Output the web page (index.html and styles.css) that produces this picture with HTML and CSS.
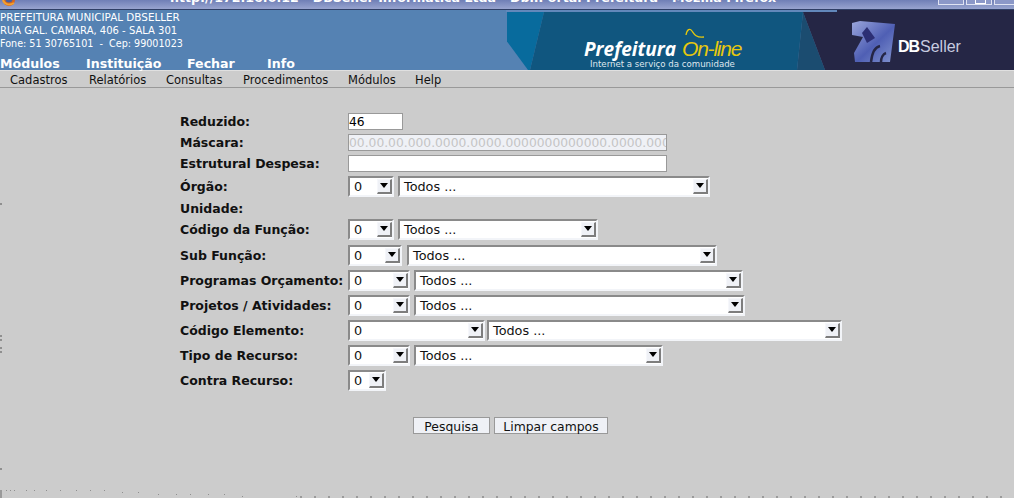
FILE: index.html
```html
<!DOCTYPE html>
<html lang="pt-BR">
<head>
<meta charset="utf-8">
<title>Prefeitura On-line</title>
<link rel="stylesheet" href="styles.css">
</head>
<body>
<div class="titlebar">
  <svg class="ff-icon" width="16" height="9" viewBox="0 0 16 9"><circle cx="8" cy="0" r="6" fill="#d8661c"/><circle cx="8" cy="-1" r="3.5" fill="#4a5f9c"/><path d="M2 0c1 4 6 6 11 3" fill="none" stroke="#f2a030" stroke-width="2"/></svg>
  <span class="title-text">http://172.16.0.12 - DBSeller Informática Ltda - Dbl.Portal Prefeitura - Mozilla Firefox</span>
  <span class="win-btns"><i></i><i class="max"></i><i></i></span>
</div>
<header class="header">
  <div class="header-left">
    <div class="address">
      <div>PREFEITURA MUNICIPAL DBSELLER</div>
      <div class="addr-2">RUA GAL. CAMARA, 406 - SALA 301</div>
      <div class="addr-3">Fone: 51 30765101 &nbsp;-&nbsp; Cep: 99001023</div>
    </div>
    <nav class="topnav"><a>Módulos</a><a>Instituição</a><a>Fechar</a><a>Info</a></nav>
  </div>
  <svg class="banner" width="508" height="60" viewBox="0 0 508 60">
    <defs>
      <linearGradient id="cube" x1="0" y1="0" x2="1" y2="1"><stop offset="0" stop-color="#9ba6dc"/><stop offset=".55" stop-color="#4f5fb4"/><stop offset="1" stop-color="#8294d0"/></linearGradient>
    </defs>
    <rect x="0" y="0" width="331" height="2" fill="#6288bb"/>
    <polygon points="1,2 38,2 24,60 22,60 1,31.5" fill="#086b9d"/>
    <polygon points="38,2 297,2 291,60 24,60" fill="#10567f"/>
    <polygon points="297,2 319,60 291,60" fill="#1b4c70"/>
    <polygon points="297,2 331,2 331,0 508,0 508,60 319,60" fill="#252645"/>
    <text class="b-pref" x="78" y="46">Prefeitura</text>
    <text class="b-online" x="176" y="46">On-line</text>
    <path d="M180 25c1-6 4-7 6-4s4 7 12 6" fill="none" stroke="#e6c80e" stroke-width="1.3"/>
    <text class="b-tag" x="84" y="57">Internet a serviço da comunidade</text>
    <polygon points="346,13 354,11 389,14 384,52 349,52 348,43 357,27 346,25" fill="url(#cube)"/>
    <polygon points="356,23 361,17 369,28 361,33" fill="#2c2f74"/>
    <path d="M365 52c1-9 4-15 9-16M375 52c0-4 2-8 5-9" fill="none" stroke="#252645" stroke-width="2.5"/>
    <text class="b-db" x="392" y="42">DB</text>
    <text class="b-seller" x="414" y="42">Seller</text>
  </svg>
</header>
<nav class="menu"><a class="m-cad">Cadastros</a><a class="m-rel">Relatórios</a><a class="m-con">Consultas</a><a class="m-pro">Procedimentos</a><a class="m-mod">Módulos</a><a>Help</a></nav>
<main class="form">
  <div class="row gap"><label class="lbl tall">Reduzido:</label><input class="text w-reduz" value="46"></div>
  <div class="row gap"><label class="lbl tall">Máscara:</label><input class="text w-long" value="00.00.00.000.0000.0000.0000000000000.0000.0000" disabled></div>
  <div class="row gap"><label class="lbl tall">Estrutural Despesa:</label><input class="text w-long"></div>
  <div class="row gap-s"><label class="lbl">Órgão:</label><div class="sel a46"><span>0</span><b></b></div><div class="sel a312"><span>Todos ...</span><b></b></div></div>
  <div class="row"><label class="lbl">Unidade:</label></div>
  <div class="row gap-l"><label class="lbl">Código da Função:</label><div class="sel a46"><span>0</span><b></b></div><div class="sel a200"><span>Todos ...</span><b></b></div></div>
  <div class="row gap"><label class="lbl">Sub Função:</label><div class="sel a54"><span>0</span><b></b></div><div class="sel a310 ml5"><span>Todos ...</span><b></b></div></div>
  <div class="row gap"><label class="lbl">Programas Orçamento:</label><div class="sel a62"><span>0</span><b></b></div><div class="sel a329"><span>Todos ...</span><b></b></div></div>
  <div class="row gap"><label class="lbl">Projetos / Atividades:</label><div class="sel a62"><span>0</span><b></b></div><div class="sel a331"><span>Todos ...</span><b></b></div></div>
  <div class="row gap"><label class="lbl">Código Elemento:</label><div class="sel a137"><span>0</span><b></b></div><div class="sel a355 ml3"><span>Todos ...</span><b></b></div></div>
  <div class="row gap"><label class="lbl">Tipo de Recurso:</label><div class="sel a62"><span>0</span><b></b></div><div class="sel a249"><span>Todos ...</span><b></b></div></div>
  <div class="row"><label class="lbl">Contra Recurso:</label><div class="sel a38"><span>0</span><b></b></div></div>
  <div class="actions"><button class="btn">Pesquisa</button><button class="btn">Limpar campos</button></div>
</main>
<svg class="ticks" width="300" height="14" viewBox="0 484 300 14"><path d="M6 491l1-1M10 491l1-1M14 491l1-1M26 491l1-1M34 491l1-1M46 491l1-1M60 491l1-1M76 491l1-1M90 491l1-1M104 491l1-1M122 493l1-1M138 493l1-1M158 495l1-1M176 495l1-1M190 495l1-1M208 495l1-1M224 495l1-1M242 497l1-1M296 497l1-1" stroke="#8f8f8f" fill="none"/></svg>
<div class="edge-dots"></div>
<div class="edge-marks"><i class="m1"></i><i class="m2"></i><i class="m3"></i><i class="m4"></i><i class="m5"></i><i class="m6"></i><i class="m7"></i></div>
</body>
</html>
```
FILE: styles.css
```css
* { box-sizing: border-box; }
html, body { margin: 0; padding: 0; }
body {
  width: 1014px;
  height: 498px;
  overflow: hidden;
  background: #cccccc;
  font-family: "DejaVu Sans", sans-serif;
  position: relative;
}

.titlebar {
  height: 10px;
  position: relative;
  overflow: hidden;
  background: linear-gradient(#6f7fb6, #98a4cf);
  border-bottom: 1px solid #2f3f66;
}
.ff-icon { position: absolute; left: 1px; top: 0; }
.title-text {
  position: absolute;
  left: 170px;
  bottom: 4px;
  font-size: 12.6px;
  line-height: 15px;
  font-weight: bold;
  color: #fff;
  white-space: nowrap;
}
.win-btns { position: absolute; right: -6px; top: 0; display: flex; gap: 2px; }
.win-btns i { position: relative; width: 26px; height: 5px; border: 1px solid #dfe3f2; border-top: 0; background: #8b98c8; }
.win-btns .max::after {
  content: "";
  position: absolute;
  left: 8px;
  top: 0;
  width: 9px;
  height: 3px;
  border: 1px solid #fff;
  border-top: 0;
}

.header {
  height: 60px;
  display: flex;
  justify-content: space-between;
  background: #5582b3;
  color: #fff;
}
.header-left { width: 506px; }
.address { font-size: 10.4px; line-height: 13px; padding-top: 1px; white-space: nowrap; height: 46px; }
.addr-2 { font-size: 10px; }
.addr-3 { font-size: 9.6px; }
.topnav { display: flex; font-size: 12.6px; font-weight: bold; line-height: 15px; }
.topnav a:nth-child(1) { width: 86px; }
.topnav a:nth-child(2) { width: 101px; }
.topnav a:nth-child(3) { width: 80px; }
.banner { display: block; flex: none; }
.b-pref { font: italic bold 19px "Open Sans", sans-serif; fill: #fff; }
.b-online { font: italic 21px "Liberation Sans", sans-serif; fill: #e6c80e; letter-spacing: -1.2px; }
.b-tag { font: 8.6px "DejaVu Sans", sans-serif; fill: #dfe7ee; }
.b-db { font: bold 16px "Liberation Sans", sans-serif; fill: #fff; letter-spacing: -1px; }
.b-seller { font: 16px "Liberation Sans", sans-serif; fill: #c8cce0; }

.menu {
  height: 18px;
  display: flex;
  padding-left: 10px;
  font-size: 11.5px;
  line-height: 18px;
  color: #111;
  background: #cccccc;
  border-top: 1px solid #e0e0e0;
  border-bottom: 1px solid #999;
}
.m-cad { width: 79px; }
.m-rel { width: 77px; }
.m-con { width: 77px; }
.m-pro { width: 105px; }
.m-mod { width: 67px; }

.form { padding: 25px 0 0 180px; }
.row { display: flex; align-items: center; }
.gap { margin-bottom: 4px; }
.gap-s { margin-bottom: 1px; }
.gap-l { margin-bottom: 5px; }
.lbl { width: 168px; font-size: 12.5px; font-weight: bold; color: #111; line-height: 21px; white-space: nowrap; }
.lbl.tall { line-height: 17px; }

.text {
  display: block;
  height: 17px;
  padding: 1px 0;
  margin: 0;
  border: 1px solid #999;
  background: #fff;
  font: 12.3px "DejaVu Sans", sans-serif;
  color: #000;
  border-radius: 0;
}
.text:disabled { background: #eff1f6; color: #c4c4c4; }
.w-reduz { width: 55px; }
.w-long { width: 319px; }

.sel {
  height: 21px;
  display: flex;
  align-items: center;
  justify-content: space-between;
  background: #fff;
  border: 2px solid;
  border-color: #8a8a8a #f2f4f8 #f2f4f8 #8a8a8a;
  margin-right: 4px;
  font-size: 12.8px;
  color: #111;
  padding-left: 4px;
  flex: none;
}
.sel.ml5 { margin-left: 1px; }
.sel.ml3 { margin-left: -2px; }
.sel b {
  position: relative;
  width: 15px;
  height: 15px;
  background: #eff1f6;
  border: 1px solid;
  border-color: #f6f7fb #7d7d7d #7d7d7d #f6f7fb;
  border-right-width: 2px;
  border-bottom-width: 2px;
}
.sel b::after {
  content: "";
  position: absolute;
  left: 2px;
  top: 3px;
  border: 4px solid transparent;
  border-top: 5px solid #000;
  border-bottom: 0;
}
.a38 { width: 38px; }
.a46 { width: 46px; }
.a54 { width: 54px; }
.a62 { width: 62px; }
.a137 { width: 137px; }
.a200 { width: 200px; }
.a249 { width: 249px; }
.a310 { width: 310px; }
.a312 { width: 312px; }
.a329 { width: 329px; }
.a331 { width: 331px; }
.a355 { width: 355px; }

.actions { display: flex; gap: 4px; padding: 26px 0 0 233px; }
.btn {
  height: 17px;
  padding: 2px 0 0;
  margin: 0;
  border: 1px solid #999;
  border-radius: 0;
  background: #eff1f6;
  font: 12.4px/14px "DejaVu Sans", sans-serif;
  color: #111;
  width: 77px;
}
.btn + .btn { width: 114px; }

.ticks { position: absolute; left: 0; top: 484px; width: 300px; height: 14px; }
.edge-dots {
  position: absolute;
  left: 300px;
  right: 0;
  bottom: 0;
  height: 2px;
  background: repeating-linear-gradient(90deg, #9a9a9a 0 2px, transparent 2px 14px);
}
.edge-marks i { position: absolute; left: 0; width: 2px; height: 2px; background: #8f8f8f; }
.m1 { top: 203px; }
.m2 { top: 335px; }
.m3 { top: 339px; }
.m4 { top: 347px; }
.m5 { top: 351px; }
.m6 { top: 468px; }
.edge-marks .m7 { top: 490px; height: 8px; background: #9a9a9a; }
```
